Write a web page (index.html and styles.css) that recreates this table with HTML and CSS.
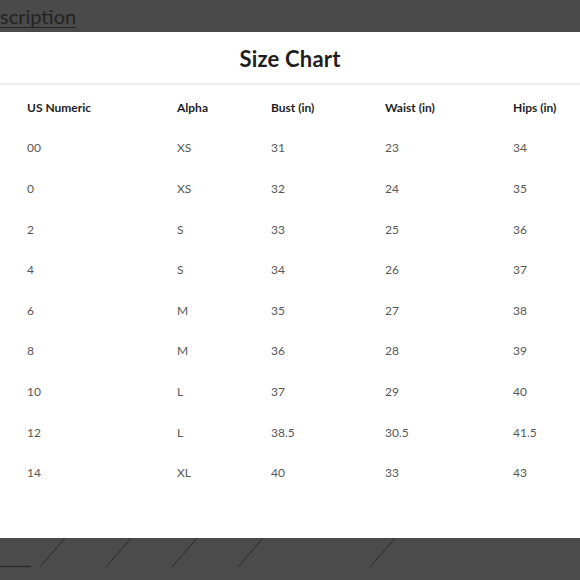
FILE: index.html
```html
<!DOCTYPE html>
<html>
<head>
<meta charset="utf-8">
<link rel="stylesheet" href="styles.css">
</head>
<body>
<div class="page">
  <div class="backdrop-top"><span class="desc-link">scription</span></div>
  <div class="modal">
    <div class="modal-head"><h1 class="modal-title">Size Chart</h1></div>
    <div class="chart">
      <div class="row head"><span>US Numeric</span><span>Alpha</span><span>Bust (in)</span><span>Waist (in)</span><span>Hips (in)</span></div>
      <div class="row"><span>00</span><span>XS</span><span>31</span><span>23</span><span>34</span></div>
      <div class="row"><span>0</span><span>XS</span><span>32</span><span>24</span><span>35</span></div>
      <div class="row"><span>2</span><span>S</span><span>33</span><span>25</span><span>36</span></div>
      <div class="row"><span>4</span><span>S</span><span>34</span><span>26</span><span>37</span></div>
      <div class="row"><span>6</span><span>M</span><span>35</span><span>27</span><span>38</span></div>
      <div class="row"><span>8</span><span>M</span><span>36</span><span>28</span><span>39</span></div>
      <div class="row"><span>10</span><span>L</span><span>37</span><span>29</span><span>40</span></div>
      <div class="row"><span>12</span><span>L</span><span>38.5</span><span>30.5</span><span>41.5</span></div>
      <div class="row"><span>14</span><span>XL</span><span>40</span><span>33</span><span>43</span></div>
    </div>
  </div>
  <div class="backdrop-bottom">
    <svg class="strokes" width="580" height="42" viewBox="0 0 580 42">
      <g stroke="#2c2c2c" stroke-width="1" fill="none">
        <line x1="40" y1="29" x2="65" y2="0"/>
        <line x1="106" y1="29" x2="131" y2="0"/>
        <line x1="172" y1="29" x2="197" y2="0"/>
        <line x1="238" y1="29" x2="263" y2="0"/>
        <line x1="370" y1="29" x2="395" y2="0"/>
        <line x1="0" y1="28.5" x2="31" y2="28.5" stroke-width="1.5"/>
      </g>
    </svg>
  </div>
</div>
</body>
</html>
```
FILE: styles.css
```css
html, body {
  margin: 0;
  padding: 0;
}
body {
  background: #4a4a4a;
  font-family: Lato, "Noto Sans", sans-serif;
  width: 580px;
  height: 580px;
  overflow: hidden;
}
.page {
  display: flex;
  flex-direction: column;
  height: 580px;
}
.backdrop-top {
  height: 32px;
  box-sizing: border-box;
  padding-top: 4px;
}
.desc-link {
  font-size: 20px;
  line-height: 24px;
  color: #232323;
  text-decoration: underline;
  text-decoration-thickness: 1px;
  text-underline-offset: 3px;
}
.modal {
  background: #fff;
  height: 506px;
  display: flex;
  flex-direction: column;
}
.modal-head {
  height: 51px;
  border-bottom: 2px solid #ececec;
  display: flex;
  align-items: center;
  justify-content: center;
}
.modal-title {
  margin: 0;
  font-size: 22px;
  font-weight: 700;
  color: #1e1e1e;
  padding-top: 2px;
  letter-spacing: 0.2px;
}
.chart {
  padding: 2px 0 0 27px;
}
.row {
  display: grid;
  grid-template-columns: 150px 94px 114px 128px 1fr;
  height: 40.6px;
  align-items: center;
  font-size: 12px;
  color: #585858;
}
.row.head {
  font-weight: 700;
  color: #1e1e1e;
}
.backdrop-bottom {
  flex: 1;
  background: #4b4b4b;
}
.strokes {
  display: block;
}
```
